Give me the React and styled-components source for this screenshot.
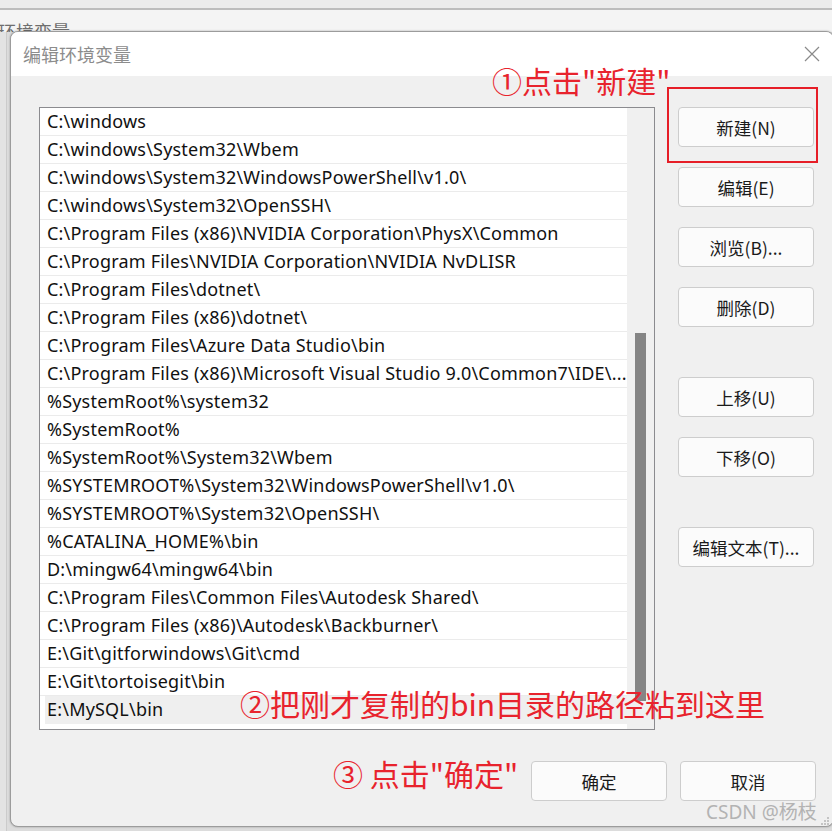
import React from "react";
import styled, { createGlobalStyle } from "styled-components";

const Global = createGlobalStyle`
  html, body { margin: 0; padding: 0; background: #e3e3e3; }
  * { box-sizing: border-box; }
`;

const UI_FONT = `"Noto Sans", "Noto Sans CJK SC", sans-serif`;
const CJK_FONT = `"Noto Sans CJK SC", "Noto Sans", sans-serif`;

const Screen = styled.div`
  position: relative;
  width: 832px;
  height: 831px;
  overflow: hidden;
  background: #e3e3e3;
  display: flex;
  flex-direction: column;
`;

const ParentTop = styled.div`
  height: 10px;
  background: #ececec;
  border-bottom: 2px solid #bdbdbd;
`;

const ParentTitle = styled.div`
  height: 22px;
  background: #f4f4f4;
  font-family: ${CJK_FONT};
  font-size: 18px;
  line-height: 18px;
  color: #6e6e6e;
  padding-top: 12px;
  margin-left: -2px;
  white-space: nowrap;
  overflow: visible;
`;

const ParentBody = styled.div`
  flex: 1;
  display: flex;
  padding-left: 6px;
  background: #e3e3e3;
`;

const ParentPanel = styled.div`
  flex: 1;
  border-left: 1px solid #cbcbcb;
  background: #dcdcdc;
`;

const Dialog = styled.div`
  position: absolute;
  left: 10px;
  top: 31px;
  width: 824px;
  height: 796px;
  border: 1px solid #9c9c9c;
  border-radius: 8px;
  overflow: hidden;
  box-shadow: 0 0 2px rgba(0, 0, 0, 0.35);
  display: flex;
  flex-direction: column;
  background: #f0f0f0;
`;

const TitleBar = styled.div`
  height: 44px;
  background: #ffffff;
  display: flex;
  align-items: center;
  justify-content: space-between;
  padding: 0 13px 0 12px;
`;

const Title = styled.span`
  font-family: ${CJK_FONT};
  font-size: 18px;
  color: #8c8c8c;
`;

const CloseIcon = styled.svg`
  width: 16px;
  height: 16px;
`;

const Body = styled.div`
  flex: 1;
  display: flex;
  flex-direction: column;
  padding: 31px 17px 0 28px;
`;

const Main = styled.div`
  display: flex;
  gap: 23px;
`;

const ListBox = styled.div`
  width: 616px;
  height: 623px;
  border: 1px solid #8b8b8f;
  background: #ffffff;
  display: flex;
`;

const Rows = styled.div`
  width: 587px;
  display: flex;
  flex-direction: column;
`;

const Row = styled.div`
  height: 28px;
  flex: none;
  border-bottom: 1px solid ${(p) => (p.$last ? "transparent" : "#ebebeb")};
  background: ${(p) => (p.$selected ? "#efefef" : "transparent")};
  margin-left: ${(p) => (p.$selected ? "5px" : "0")};
  padding-left: ${(p) => (p.$selected ? "2px" : "7px")};
  font-family: ${UI_FONT};
  font-size: 18px;
  letter-spacing: 0.2px;
  line-height: 27px;
  color: #111111;
  white-space: nowrap;
  overflow: hidden;
`;

const Track = styled.div`
  flex: 1;
  background: #f0f0f0;
  padding: 225px 0 0 8px;
`;

const Thumb = styled.div`
  width: 11px;
  height: 368px;
  background: #858585;
`;

const ButtonColumn = styled.div`
  display: flex;
  flex-direction: column;
`;

const Button = styled.div`
  width: 136px;
  height: 40px;
  flex: none;
  margin-top: ${(p) => p.$gap ?? 0}px;
  border: 1px solid #cdcdcd;
  border-radius: 4px;
  background: #fbfbfb;
  display: flex;
  align-items: center;
  justify-content: center;
  font-family: ${CJK_FONT};
  font-size: 17.5px;
  color: #1a1a1a;
`;

const Footer = styled.div`
  margin-top: 31px;
  display: flex;
  justify-content: flex-end;
  gap: 13px;
`;

const Annotation = styled.div`
  position: absolute;
  left: ${(p) => p.$x}px;
  top: ${(p) => p.$y}px;
  font-family: ${CJK_FONT};
  font-size: 30px;
  line-height: 30px;
  color: #e8232d;
  white-space: nowrap;
`;

const RedBox = styled.div`
  position: absolute;
  left: 667px;
  top: 87px;
  width: 151px;
  height: 76px;
  border: 2px solid #e61e27;
`;

const Watermark = styled.div`
  position: absolute;
  left: 706px;
  top: 802px;
  font-family: ${UI_FONT};
  font-size: 19px;
  line-height: 21px;
  color: #b3b3b3;
  white-space: nowrap;
`;

const Grip = styled.svg`
  position: absolute;
  right: 2px;
  bottom: 5px;
  width: 10px;
  height: 10px;
`;

const paths = [
  "C:\\windows",
  "C:\\windows\\System32\\Wbem",
  "C:\\windows\\System32\\WindowsPowerShell\\v1.0\\",
  "C:\\windows\\System32\\OpenSSH\\",
  "C:\\Program Files (x86)\\NVIDIA Corporation\\PhysX\\Common",
  "C:\\Program Files\\NVIDIA Corporation\\NVIDIA NvDLISR",
  "C:\\Program Files\\dotnet\\",
  "C:\\Program Files (x86)\\dotnet\\",
  "C:\\Program Files\\Azure Data Studio\\bin",
  "C:\\Program Files (x86)\\Microsoft Visual Studio 9.0\\Common7\\IDE\\...",
  "%SystemRoot%\\system32",
  "%SystemRoot%",
  "%SystemRoot%\\System32\\Wbem",
  "%SYSTEMROOT%\\System32\\WindowsPowerShell\\v1.0\\",
  "%SYSTEMROOT%\\System32\\OpenSSH\\",
  "%CATALINA_HOME%\\bin",
  "D:\\mingw64\\mingw64\\bin",
  "C:\\Program Files\\Common Files\\Autodesk Shared\\",
  "C:\\Program Files (x86)\\Autodesk\\Backburner\\",
  "E:\\Git\\gitforwindows\\Git\\cmd",
  "E:\\Git\\tortoisegit\\bin",
  "E:\\MySQL\\bin",
];

const sideButtons = [
  { label: "新建(N)", gap: 0 },
  { label: "编辑(E)", gap: 20 },
  { label: "浏览(B)...", gap: 20 },
  { label: "删除(D)", gap: 20 },
  { label: "上移(U)", gap: 50 },
  { label: "下移(O)", gap: 20 },
  { label: "编辑文本(T)...", gap: 50 },
];

export default function App() {
  return (
    <>
      <Global />
      <Screen>
        <ParentTop />
        <ParentTitle>环境变量</ParentTitle>
        <ParentBody>
          <ParentPanel />
        </ParentBody>

        <Dialog>
          <TitleBar>
            <Title>编辑环境变量</Title>
            <CloseIcon viewBox="0 0 16 16">
              <path d="M1 1 L15 15 M15 1 L1 15" stroke="#8a8a8a" strokeWidth="1.2" fill="none" />
            </CloseIcon>
          </TitleBar>
          <Body>
            <Main>
              <ListBox>
                <Rows>
                  {paths.map((p, i) => (
                    <Row key={i} $selected={i === paths.length - 1} $last={i === paths.length - 1}>
                      {p}
                    </Row>
                  ))}
                </Rows>
                <Track>
                  <Thumb />
                </Track>
              </ListBox>
              <ButtonColumn>
                {sideButtons.map((b) => (
                  <Button key={b.label} $gap={b.gap}>
                    {b.label}
                  </Button>
                ))}
              </ButtonColumn>
            </Main>
            <Footer>
              <Button>确定</Button>
              <Button>取消</Button>
            </Footer>
          </Body>
        </Dialog>

        <RedBox />
        <Annotation $x={492} $y={65}>①点击"新建"</Annotation>
        <Annotation $x={240} $y={688}>②把刚才复制的bin目录的路径粘到这里</Annotation>
        <Annotation $x={333} $y={758}>③ 点击"确定"</Annotation>
        <Watermark>CSDN @杨枝</Watermark>
        <Grip viewBox="0 0 10 10">
          <rect x="7" y="1" width="2" height="2" fill="#c4c4c4" />
          <rect x="4" y="4" width="2" height="2" fill="#c4c4c4" />
          <rect x="7" y="4" width="2" height="2" fill="#c4c4c4" />
          <rect x="1" y="7" width="2" height="2" fill="#c4c4c4" />
          <rect x="4" y="7" width="2" height="2" fill="#c4c4c4" />
          <rect x="7" y="7" width="2" height="2" fill="#c4c4c4" />
        </Grip>
      </Screen>
    </>
  );
}
